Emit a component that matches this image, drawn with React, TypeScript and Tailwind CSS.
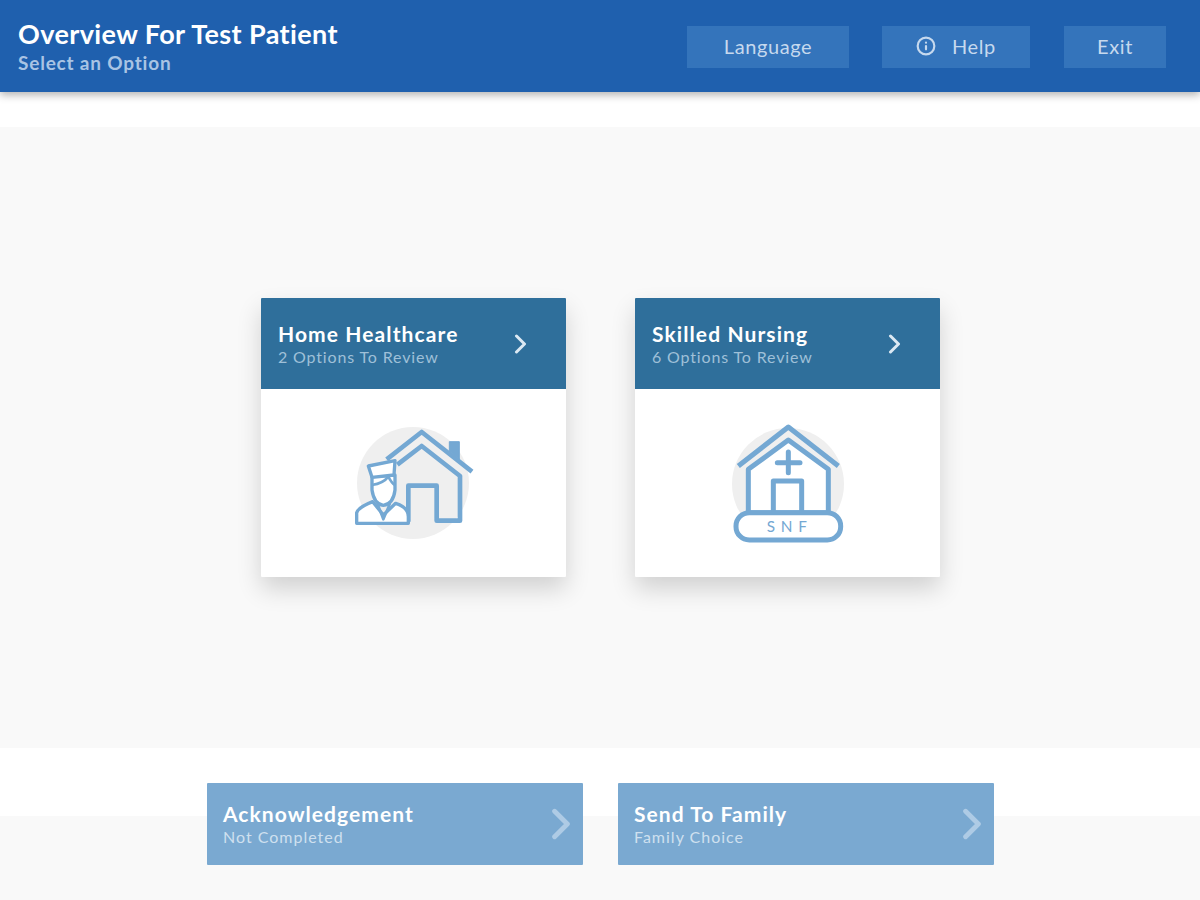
import React from 'react';
import { Info } from 'lucide-react';

const Chevron = ({ className }: { className?: string }) => (
  <svg viewBox="0 0 12 20" fill="none" stroke="currentColor" strokeLinecap="round" strokeLinejoin="round" className={className}>
    <path d="M2 2L10 10L2 18" strokeWidth="3" />
  </svg>
);

const HomeIcon = () => (
  <svg width="145" height="130" viewBox="3 -6 435 390" fill="none" stroke="#74a8d3" strokeWidth="14" strokeLinejoin="round">
    <circle cx="219" cy="189" r="168" fill="#efefef" stroke="none" />
    <path d="M328 65H358V118L328 94Z" fill="#74a8d3" strokeWidth="3" />
    <path d="M140 118L245 36L396 155" />
    <path d="M172 134L245 78L360 168V302H290V197H205V305" />
    <path d="M50 310V278Q55 262 98 245L130 285L167 250Q205 262 205 290V310Z" fill="#fff" strokeWidth="10" />
    <path d="M96 170V210Q102 252 130 256Q160 252 165 210V165Z" fill="#fff" strokeWidth="10" />
    <path d="M85 138L165 122L162 165L96 172Z" fill="#fff" strokeWidth="10" />
    <path d="M96 195Q130 190 145 170Q155 190 165 195" strokeWidth="8" />
    <path d="M112 250L130 298L150 250" strokeWidth="8" />
  </svg>
);

const SnfIcon = () => (
  <svg width="135" height="135" viewBox="0 0 405 405" fill="none" stroke="#74a8d3" strokeWidth="15" strokeLinecap="round" strokeLinejoin="round">
    <circle cx="204" cy="204" r="168" fill="#efefef" stroke="none" />
    <path d="M55 150L205 33L355 150" strokeLinecap="butt" />
    <path d="M85 160L205 72L325 160V290H85Z" fill="#fff" />
    <path d="M160 288V195H245V288" />
    <path d="M205 108V170M172 140H240" />
    <rect x="48" y="290" width="314" height="82" rx="40" fill="#fff" />
    <text x="209" y="347" textAnchor="middle" fontSize="46" letterSpacing="17" fill="#74a8d3" stroke="none" fontFamily="Lato, sans-serif">SNF</text>
  </svg>
);

const Card = ({ title, sub, icon }: { title: string; sub: string; icon: React.ReactNode }) => (
  <div className="w-[305px] h-[279px] bg-white rounded-[1px] shadow-[0_12px_24px_rgba(0,0,0,0.16)] flex flex-col">
    <div className="h-[91px] bg-[#2f6f9b] rounded-t-[1px] pl-[17px] pr-[39px] flex items-center justify-between">
      <div>
        <div className="text-[21px] leading-[26px] font-bold text-white tracking-[1.1px]">{title}</div>
        <div className="text-[16px] leading-[20px] text-[#9fc0d8] tracking-[0.85px]">{sub}</div>
      </div>
      <Chevron className="w-[13px] h-[20px] text-[#dce9f3]" />
    </div>
    <div className="flex-1 flex items-center justify-center">{icon}</div>
  </div>
);

const BottomButton = ({ title, sub }: { title: string; sub: string }) => (
  <div className="w-[376px] h-[82px] bg-[#7aa9d1] rounded-[1px] pl-[16px] pr-[12px] flex items-center justify-between">
    <div>
      <div className="text-[21px] leading-[26px] font-bold text-white tracking-[1.05px]">{title}</div>
      <div className="text-[16px] leading-[20px] text-[#cfe0ef] tracking-[1px]">{sub}</div>
    </div>
    <Chevron className="w-[20px] h-[32px] text-[#aecbe5]" />
  </div>
);

export default function App() {
  return (
    <div className="w-[1200px] h-[900px] flex flex-col overflow-hidden bg-white font-['Lato',sans-serif]">
      <header className="relative z-10 h-[92px] shrink-0 bg-[#1f60ae] shadow-[0_3px_8px_rgba(0,0,0,0.3)] pl-[18px] pr-[34px] flex items-center justify-between">
        <div>
          <h1 className="text-[27px] leading-[32px] font-bold text-white tracking-[0.4px]">Overview For Test Patient</h1>
          <p className="mt-[2px] text-[19px] leading-[22px] font-bold text-[#a9c4e4] tracking-[0.8px]">Select an Option</p>
        </div>
        <nav className="mt-[2px] flex text-[20px] text-[#c6d9ee] tracking-[0.6px]">
          <button className="w-[162px] h-[42px] pb-[2px] bg-[#3474bb]">Language</button>
          <button className="ml-[33px] w-[148px] h-[42px] pb-[2px] bg-[#3474bb] flex items-center justify-center gap-[16px]">
            <Info size={20} strokeWidth={2.6} />
            Help
          </button>
          <button className="ml-[34px] w-[102px] h-[42px] pb-[2px] bg-[#3474bb]">Exit</button>
        </nav>
      </header>

      <main className="mt-[35px] h-[621px] shrink-0 bg-[#f9f9f9] flex items-center justify-center gap-[69px] pl-px">
        <Card title="Home Healthcare" sub="2 Options To Review" icon={<HomeIcon />} />
        <Card title="Skilled Nursing" sub="6 Options To Review" icon={<SnfIcon />} />
      </main>

      {/* white strip runs behind the top half of the buttons */}
      <footer className="flex-1 pt-[35px] flex justify-center gap-[35px] pl-px bg-[linear-gradient(to_bottom,#ffffff_68px,#f9f9f9_68px)]">
        <BottomButton title="Acknowledgement" sub="Not Completed" />
        <BottomButton title="Send To Family" sub="Family Choice" />
      </footer>
    </div>
  );
}
